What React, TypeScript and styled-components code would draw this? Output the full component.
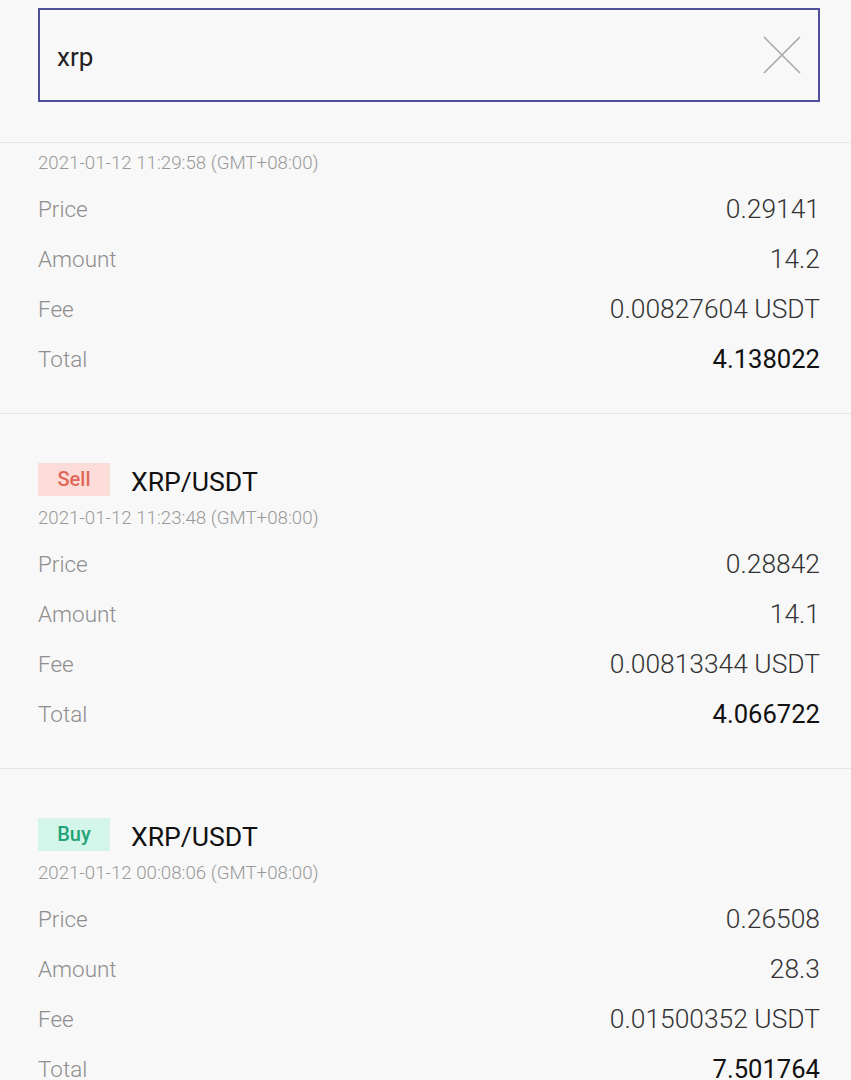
import React from 'react';
import styled, { createGlobalStyle } from 'styled-components';

const GlobalStyle = createGlobalStyle`
  html, body {
    margin: 0;
    padding: 0;
    background: #f8f8f8;
    font-family: Roboto, "Noto Sans", sans-serif;
  }
`;

const Page = styled.div`
  width: 851px;
  background: #f8f8f8;
`;

const SearchBar = styled.div`
  padding: 8px 31px 40px 38px;
  border-bottom: 1px solid #e6e6e6;
`;

const SearchBox = styled.div`
  height: 90px;
  border: 2px solid #50509a;
  display: flex;
  align-items: center;
  justify-content: space-between;
  padding: 0 17px 0 17px;
`;

const SearchText = styled.span`
  font-size: 26px;
  color: #222;
  font-weight: 400;
  padding-top: 4px;
`;

const Card = styled.div<{ $first?: boolean }>`
  padding: ${(p) => (p.$first ? '8px' : '48px')} 31px 29px 38px;
  border-bottom: 1px solid #e6e6e6;
`;

const Head = styled.div`
  display: flex;
  align-items: center;
  gap: 21px;
  height: 34px;
  margin-bottom: 10px;
`;

const Tag = styled.span<{ $side: 'buy' | 'sell' }>`
  width: 72px;
  height: 33px;
  display: flex;
  align-items: center;
  justify-content: center;
  font-size: 20px;
  font-weight: 500;
  background: ${(p) => (p.$side === 'sell' ? '#fcdcd8' : '#d4f5e9')};
  color: ${(p) => (p.$side === 'sell' ? '#e06858' : '#25a377')};
`;

const Pair = styled.span`
  font-size: 26.6px;
  color: #111;
  padding-top: 4px;
`;

const Date = styled.div`
  font-size: 18.7px;
  line-height: 24px;
  color: #999;
  font-weight: 300;
  margin-bottom: 9px;
`;

const Row = styled.div`
  height: 50px;
  display: flex;
  align-items: center;
  justify-content: space-between;
`;

const Label = styled.span`
  font-size: 22.5px;
  color: #8e8e8e;
  font-weight: 300;
`;

const Value = styled.span<{ $strong?: boolean }>`
  font-size: ${(p) => (p.$strong ? '25.6px' : '26.4px')};
  font-weight: ${(p) => (p.$strong ? 400 : 300)};
  color: ${(p) => (p.$strong ? '#111' : '#333')};
`;

interface Trade {
  side?: 'buy' | 'sell';
  date: string;
  price: string;
  amount: string;
  fee: string;
  total: string;
}

const trades: Trade[] = [
  { date: '2021-01-12 11:29:58 (GMT+08:00)', price: '0.29141', amount: '14.2', fee: '0.00827604 USDT', total: '4.138022' },
  { side: 'sell', date: '2021-01-12 11:23:48 (GMT+08:00)', price: '0.28842', amount: '14.1', fee: '0.00813344 USDT', total: '4.066722' },
  { side: 'buy', date: '2021-01-12 00:08:06 (GMT+08:00)', price: '0.26508', amount: '28.3', fee: '0.01500352 USDT', total: '7.501764' },
];

const CloseIcon = () => (
  <svg width="38" height="38" viewBox="0 0 38 38">
    <path d="M1 1 L37 37 M37 1 L1 37" stroke="#a8a8a8" strokeWidth="1.6" fill="none" />
  </svg>
);

const App: React.FC = () => {
  return (
    <Page>
      <GlobalStyle />
      <SearchBar>
        <SearchBox>
          <SearchText>xrp</SearchText>
          <CloseIcon />
        </SearchBox>
      </SearchBar>
      {trades.map((t, i) => (
        <Card key={i} $first={!t.side}>
          {t.side && (
            <Head>
              <Tag $side={t.side}>{t.side === 'sell' ? 'Sell' : 'Buy'}</Tag>
              <Pair>XRP/USDT</Pair>
            </Head>
          )}
          <Date>{t.date}</Date>
          <Row>
            <Label>Price</Label>
            <Value>{t.price}</Value>
          </Row>
          <Row>
            <Label>Amount</Label>
            <Value>{t.amount}</Value>
          </Row>
          <Row>
            <Label>Fee</Label>
            <Value>{t.fee}</Value>
          </Row>
          <Row>
            <Label>Total</Label>
            <Value $strong>{t.total}</Value>
          </Row>
        </Card>
      ))}
    </Page>
  );
};

export default App;
